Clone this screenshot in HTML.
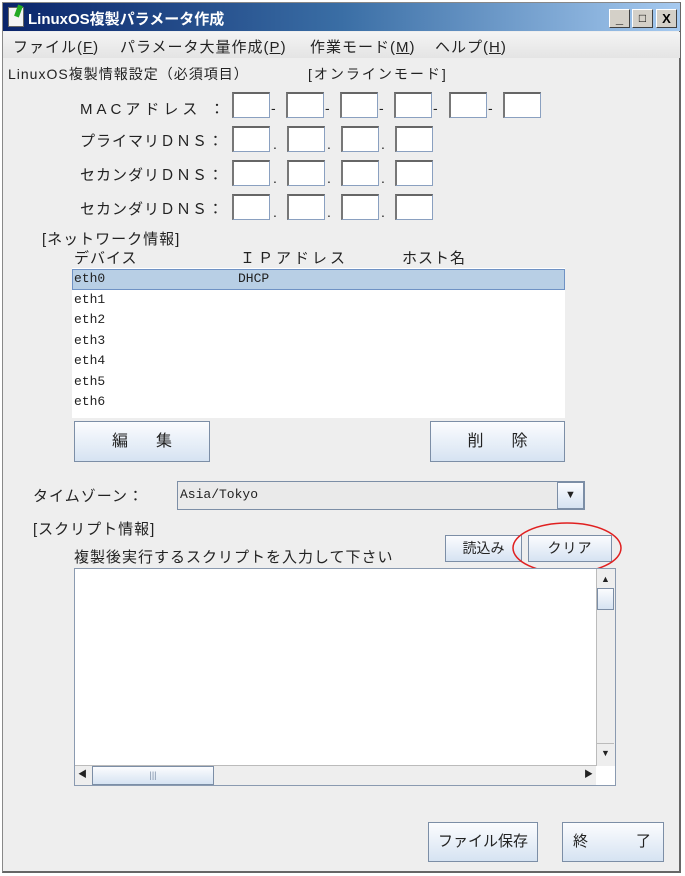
<!DOCTYPE html>
<html><head><meta charset="utf-8"><style>
*{box-sizing:border-box;margin:0;padding:0}
body{width:685px;height:876px;background:#fff;position:relative;overflow:hidden;font-family:"Liberation Sans","Noto Sans CJK JP",sans-serif;font-size:14px;color:#222}
.a{position:absolute;white-space:nowrap}
.win{left:2px;top:2px;width:679px;height:871px;background:#eeeeee;border:1px solid #888;border-right:2px solid #666;border-bottom:2px solid #666}
.title{left:3px;top:3px;width:677px;height:28px;background:linear-gradient(90deg,#0a246a 0%,#3a6ea5 50%,#a6caf0 100%)}
.tb{width:21px;height:19px;top:9px;background:#d4d0c8;border:1px solid;border-color:#fff #404040 #404040 #fff;font-size:13px;font-weight:bold;text-align:center;line-height:17px;color:#000}
.menu{left:3px;top:32px;width:677px;height:26px;background:linear-gradient(#f4f4f4,#e4e4e4)}
.box{width:38px;height:26px;background:#fff;border:1px solid #8aa0c0;border-left:2px solid #777;border-top:2px solid #666}
.btn{background:linear-gradient(#fbfcfe,#d6e3f2);border:1px solid #7c8ea6;text-align:center;color:#222}
.lbl{font-size:15px;letter-spacing:1px}
.row{left:74px;font-family:"Liberation Mono","Noto Sans CJK JP",monospace;font-size:13px}
.m{top:36px;font-size:15px;letter-spacing:1px}
</style></head><body>
<div class="a win"></div>
<div class="a title"></div>
<div class="a" style="left:8px;top:7px;width:16px;height:20px;background:#f4f4f4;border:1px solid #666"></div>
<div class="a" style="left:16px;top:5px;width:5px;height:12px;background:#2a2;transform:rotate(20deg)"></div>
<div class="a" style="left:28px;top:8px;color:#fff;font-size:15px;font-weight:bold">LinuxOS複製パラメータ作成</div>
<div class="a tb" style="left:609px">_</div>
<div class="a tb" style="left:632px;font-size:12px">□</div>
<div class="a tb" style="left:656px">X</div>
<div class="a menu"></div>
<div class="a m" style="left:13px">ファイル(<u>F</u>)</div>
<div class="a m" style="left:120px">パラメータ大量作成(<u>P</u>)</div>
<div class="a m" style="left:310px">作業モード(<u>M</u>)</div>
<div class="a m" style="left:435px">ヘルプ(<u>H</u>)</div>
<div class="a" style="left:8px;top:64px;font-size:14px;letter-spacing:1px">LinuxOS複製情報設定（必須項目）</div>
<div class="a" style="left:308px;top:64px;font-size:14px;letter-spacing:2px">[オンラインモード]</div>

<div class="a lbl" style="left:80px;top:98px;letter-spacing:4px">MACアドレス&nbsp;：</div>
<div class="a box" style="left:232px;top:92px"></div><div class="a" style="left:271px;top:100px">-</div>
<div class="a box" style="left:286px;top:92px"></div><div class="a" style="left:325px;top:100px">-</div>
<div class="a box" style="left:340px;top:92px"></div><div class="a" style="left:379px;top:100px">-</div>
<div class="a box" style="left:394px;top:92px"></div><div class="a" style="left:433px;top:100px">-</div>
<div class="a box" style="left:449px;top:92px"></div><div class="a" style="left:488px;top:100px">-</div>
<div class="a box" style="left:503px;top:92px"></div>

<div class="a lbl" style="left:80px;top:130px">プライマリＤＮＳ：</div>
<div class="a lbl" style="left:80px;top:164px">セカンダリＤＮＳ：</div>
<div class="a lbl" style="left:80px;top:198px">セカンダリＤＮＳ：</div>
<div class="a box" style="left:232px;top:126px"></div><div class="a" style="left:273px;top:136px">.</div>
<div class="a box" style="left:287px;top:126px"></div><div class="a" style="left:327px;top:136px">.</div>
<div class="a box" style="left:341px;top:126px"></div><div class="a" style="left:381px;top:136px">.</div>
<div class="a box" style="left:395px;top:126px"></div>
<div class="a box" style="left:232px;top:160px"></div><div class="a" style="left:273px;top:170px">.</div>
<div class="a box" style="left:287px;top:160px"></div><div class="a" style="left:327px;top:170px">.</div>
<div class="a box" style="left:341px;top:160px"></div><div class="a" style="left:381px;top:170px">.</div>
<div class="a box" style="left:395px;top:160px"></div>
<div class="a box" style="left:232px;top:194px"></div><div class="a" style="left:273px;top:204px">.</div>
<div class="a box" style="left:287px;top:194px"></div><div class="a" style="left:327px;top:204px">.</div>
<div class="a box" style="left:341px;top:194px"></div><div class="a" style="left:381px;top:204px">.</div>
<div class="a box" style="left:395px;top:194px"></div>

<div class="a" style="left:42px;top:228px;font-size:15px;letter-spacing:1px">[ネットワーク情報]</div>
<div class="a" style="left:74px;top:247px;font-size:15px;letter-spacing:1px">デバイス</div>
<div class="a" style="left:240px;top:247px;font-size:15px;letter-spacing:3px">ＩＰアドレス</div>
<div class="a" style="left:402px;top:247px;font-size:15px;letter-spacing:1px">ホスト名</div>
<div class="a" style="left:72px;top:268px;width:493px;height:150px;background:#fff"></div>
<div class="a" style="left:72px;top:269px;width:493px;height:21px;background:#b8cfe5;border:1px solid #6f92c4"></div>
<div class="a row" style="top:271px">eth0</div><div class="a row" style="left:238px;top:271px">DHCP</div>
<div class="a row" style="top:292px">eth1</div>
<div class="a row" style="top:312px">eth2</div>
<div class="a row" style="top:333px">eth3</div>
<div class="a row" style="top:353px">eth4</div>
<div class="a row" style="top:374px">eth5</div>
<div class="a row" style="top:394px">eth6</div>

<div class="a btn" style="left:74px;top:421px;width:136px;height:41px;line-height:39px;font-size:16px;letter-spacing:28px;padding-left:28px">編集</div>
<div class="a btn" style="left:430px;top:421px;width:135px;height:41px;line-height:39px;font-size:16px;letter-spacing:28px;padding-left:28px">削除</div>

<div class="a" style="left:33px;top:485px;font-size:15px;letter-spacing:1px">タイムゾーン：</div>
<div class="a" style="left:177px;top:481px;width:408px;height:29px;background:#eaeaea;border:1px solid #7c8ea6"></div>
<div class="a" style="left:180px;top:487px;font-family:'Liberation Mono',monospace;font-size:13px">Asia/Tokyo</div>
<div class="a btn" style="left:557px;top:482px;width:27px;height:27px;font-size:11px;line-height:25px">▼</div>

<div class="a" style="left:33px;top:518px;font-size:15px;letter-spacing:1px">[スクリプト情報]</div>
<div class="a" style="left:74px;top:546px;font-size:15px;letter-spacing:1px">複製後実行するスクリプトを入力して下さい</div>
<div class="a btn" style="left:445px;top:535px;width:77px;height:27px;line-height:25px;font-size:14px">読込み</div>
<div class="a btn" style="left:528px;top:535px;width:84px;height:27px;line-height:25px;font-size:14px;letter-spacing:1px">クリア</div>
<svg class="a" style="left:510px;top:520px" width="115" height="56"><ellipse cx="57" cy="28" rx="54" ry="25" fill="none" stroke="#e02020" stroke-width="1.5"/></svg>

<div class="a" style="left:74px;top:568px;width:542px;height:218px;background:#fff;border:1px solid #8a9ab0"></div>
<div class="a" style="left:596px;top:569px;width:19px;height:197px;background:#eee;border-left:1px solid #bbb"></div>
<div class="a" style="left:597px;top:571px;width:17px;height:16px;font-size:9px;text-align:center;line-height:16px">▲</div>
<div class="a btn" style="left:597px;top:588px;width:17px;height:22px"></div>
<div class="a" style="left:597px;top:743px;width:17px;height:18px;font-size:9px;text-align:center;line-height:18px;border-top:1px solid #bbb">▼</div>
<div class="a" style="left:75px;top:765px;width:521px;height:20px;background:#eee;border-top:1px solid #bbb"></div>
<div class="a" style="left:78px;top:767px;font-size:9px">◀</div>
<div class="a btn" style="left:92px;top:766px;width:122px;height:19px;font-size:9px;line-height:17px;color:#7c8ea6">|||</div>
<div class="a" style="left:584px;top:767px;font-size:9px">▶</div>

<div class="a btn" style="left:428px;top:822px;width:110px;height:40px;line-height:38px;font-size:15px">ファイル保存</div>
<div class="a btn" style="left:562px;top:822px;width:102px;height:40px;line-height:38px;font-size:15px;text-align:left;padding-left:10px">終<span style="margin-left:48px">了</span></div>
</body></html>
